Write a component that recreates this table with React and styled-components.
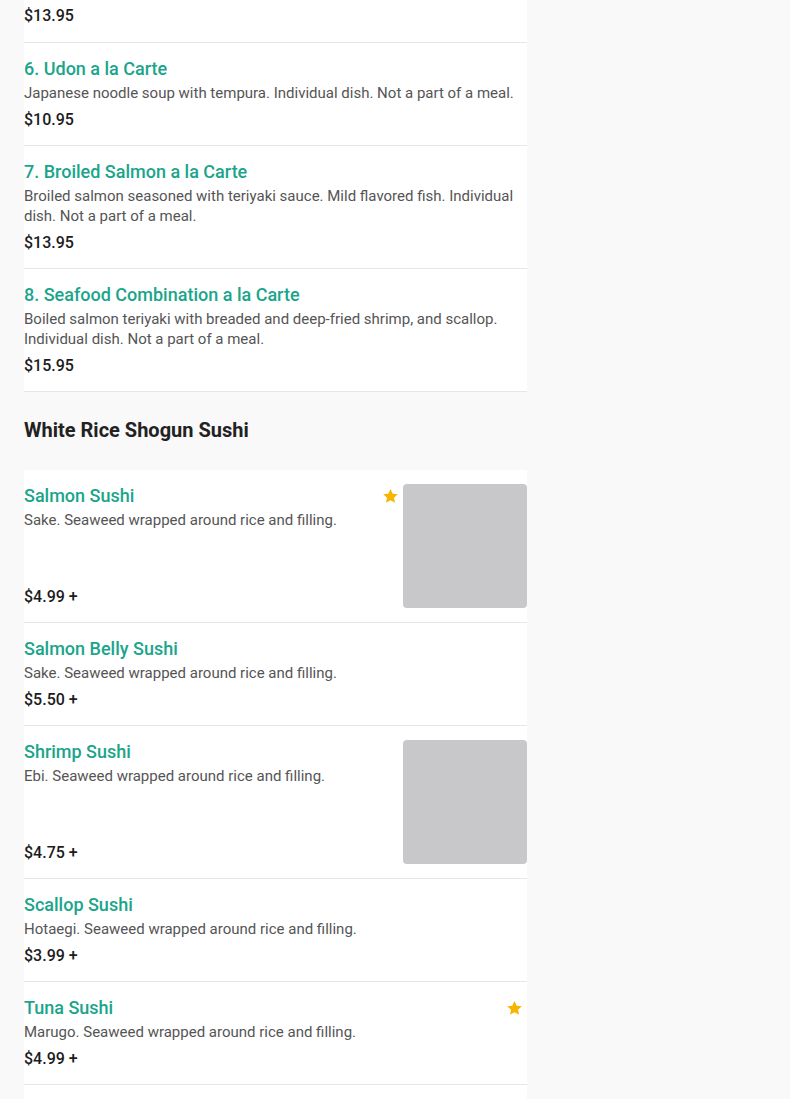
import React from "react";
import styled, { createGlobalStyle } from "styled-components";

const GlobalStyle = createGlobalStyle`
  html, body {
    margin: 0;
    padding: 0;
    background: #f9f9fa;
    font-family: Roboto, "Liberation Sans", Arial, sans-serif;
  }
`;

const Page = styled.div`
  padding: 0 263px 0 24px;
`;

const List = styled.div`
  display: flex;
  flex-direction: column;
`;

const Row = styled.div`
  background: #fff;
  display: flex;
  padding: ${p => (p.$partial ? "4px 0 14px" : "14px 0 13px")};
  border-bottom: 1px solid #e6e6e8;
`;

const Info = styled.div`
  flex: 1;
  display: flex;
  flex-direction: column;
  justify-content: ${p => (p.$withImage ? "space-between" : "flex-start")};
  padding-right: 4px;
  min-width: 0;
`;

const TitleLine = styled.div`
  display: flex;
  align-items: center;
  justify-content: space-between;
`;

const Title = styled.div`
  font-size: 18px;
  line-height: 24px;
  font-weight: 500;
  color: #1aa58b;
`;

const Star = styled.svg`
  width: 17px;
  height: 17px;
  flex-shrink: 0;
`;

const Desc = styled.div`
  font-size: 15px;
  line-height: 20px;
  color: #555;
  margin-top: 2px;
`;

const Price = styled.div`
  font-size: 16px;
  line-height: 24px;
  font-weight: 500;
  color: #1c1c1c;
  margin-top: ${p => (p.$flush ? "0" : "5px")};
`;

const Thumb = styled.div`
  width: 124px;
  height: 124px;
  border-radius: 4px;
  background: #c8c8ca;
  flex-shrink: 0;
  margin-bottom: 1px;
`;

const SectionTitle = styled.h2`
  margin: 0;
  padding: 25px 0 27px;
  font-size: 20px;
  line-height: 26px;
  font-weight: 700;
  color: #222;
`;

const StarIcon = () => (
  <Star viewBox="0 0 24 24">
    <path
      fill="#f7b500"
      d="M12 1.5l3.1 6.6 7.2.8-5.4 4.9 1.5 7.1L12 17.3l-6.4 3.6 1.5-7.1-5.4-4.9 7.2-.8z"
    />
  </Star>
);

const alaCarte = [
  {
    title: "6. Udon a la Carte",
    desc: "Japanese noodle soup with tempura. Individual dish. Not a part of a meal.",
    price: "$10.95",
  },
  {
    title: "7. Broiled Salmon a la Carte",
    desc: "Broiled salmon seasoned with teriyaki sauce. Mild flavored fish. Individual dish. Not a part of a meal.",
    price: "$13.95",
  },
  {
    title: "8. Seafood Combination a la Carte",
    desc: "Boiled salmon teriyaki with breaded and deep-fried shrimp, and scallop. Individual dish. Not a part of a meal.",
    price: "$15.95",
  },
];

const sushi = [
  { title: "Salmon Sushi", desc: "Sake. Seaweed wrapped around rice and filling.", price: "$4.99 +", star: true, image: true },
  { title: "Salmon Belly Sushi", desc: "Sake. Seaweed wrapped around rice and filling.", price: "$5.50 +" },
  { title: "Shrimp Sushi", desc: "Ebi. Seaweed wrapped around rice and filling.", price: "$4.75 +", image: true },
  { title: "Scallop Sushi", desc: "Hotaegi. Seaweed wrapped around rice and filling.", price: "$3.99 +" },
  { title: "Tuna Sushi", desc: "Marugo. Seaweed wrapped around rice and filling.", price: "$4.99 +", star: true },
  { title: "Yellowtail Sushi", desc: "Hamachi. Seaweed wrapped around rice and filling.", price: "$4.99 +" },
];

const Item = ({ item }) => (
  <Row>
    <Info $withImage={item.image}>
      <div>
        <TitleLine>
          <Title>{item.title}</Title>
          {item.star && <StarIcon />}
        </TitleLine>
        <Desc>{item.desc}</Desc>
      </div>
      <Price>{item.price}</Price>
    </Info>
    {item.image && <Thumb />}
  </Row>
);

export default function App() {
  return (
    <Page>
      <GlobalStyle />
      <List>
        <Row $partial>
          <Info>
            <Price $flush>$13.95</Price>
          </Info>
        </Row>
        {alaCarte.map(item => (
          <Item key={item.title} item={item} />
        ))}
      </List>
      <SectionTitle>White Rice Shogun Sushi</SectionTitle>
      <List>
        {sushi.map(item => (
          <Item key={item.title} item={item} />
        ))}
      </List>
    </Page>
  );
}
